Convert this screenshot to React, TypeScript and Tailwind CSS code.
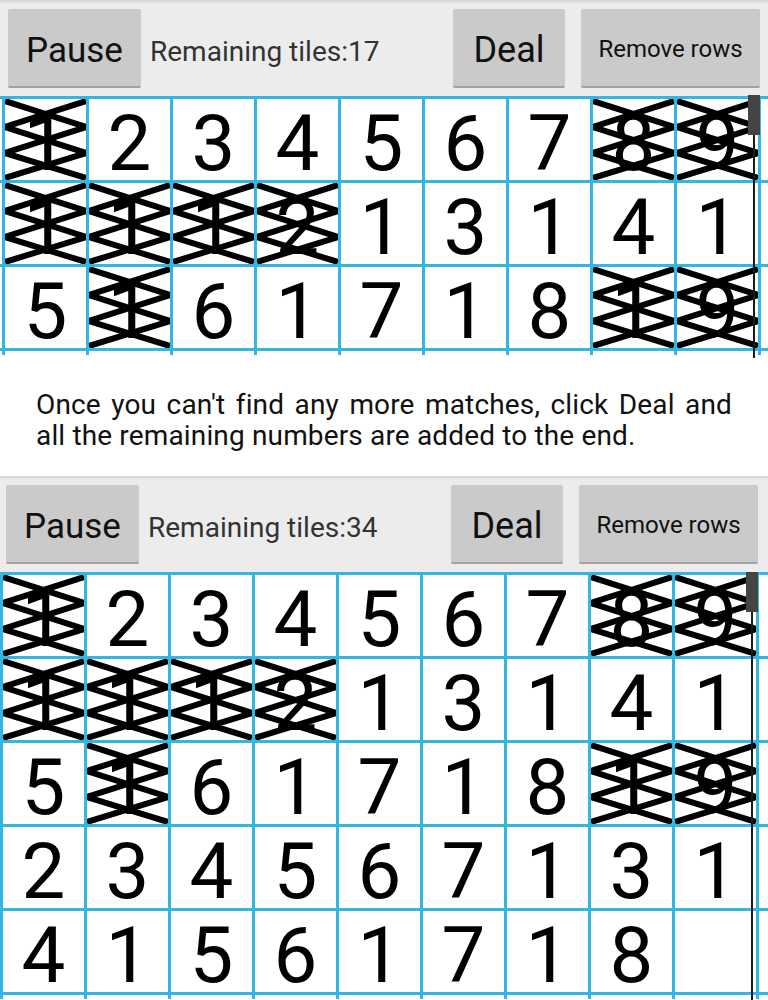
import React from "react";

// rows are written as "digit" or "digit x" (crossed out), "_" is an empty cell
const FIRST = [
    "1x 2 3 4 5 6 7 8x 9x",
    "1x 1x 1x 2x 1 3 1 4 1",
    "5 1x 6 1 7 1 8 1x 9x",
];

const SECOND = [
    ...FIRST,
    "2 3 4 5 6 7 1 3 1",
    "4 1 5 6 1 7 1 8 _",
];

function Cross() {
    return (
        <svg className="absolute inset-0 w-full h-full" viewBox="0 0 81 81" preserveAspectRatio="none">
            <polyline points="0,2 81,28 0,54 81,79" fill="none" stroke="#000" strokeWidth="6" strokeLinejoin="bevel" />
            <polyline points="81,2 0,28 81,54 0,79" fill="none" stroke="#000" strokeWidth="6" strokeLinejoin="bevel" />
        </svg>
    );
}

function Cell({ value, last }: { value: string; last: boolean }) {
    const crossed = value.endsWith("x");
    const digit = value === "_" ? "" : value.replace("x", "");
    return (
        <div
            className={
                last
                    ? "w-[87px] h-[81px] border-l-[3px] border-r-[3px] border-[#33b5e5]"
                    : "w-[84px] h-[81px] border-l-[3px] border-[#33b5e5]"
            }
        >
            <div className="relative w-full h-full flex items-center justify-center pt-[8px] text-[78px] leading-none text-black">
                {digit}
                {crossed && <Cross />}
            </div>
        </div>
    );
}

function Button({ label, className }: { label: string; className: string }) {
    return (
        <div
            className={
                "h-[79px] flex items-center justify-center bg-[#cacaca] border-b-2 border-[#a2a2a2] rounded-[2px] text-[#111] leading-none " +
                className
            }
        >
            {label}
        </div>
    );
}

function Panel({ rows, remaining, shifted }: { rows: string[]; remaining: number; shifted: boolean }) {
    return (
        <div>
            <div
                className={
                    shifted
                        ? "h-[96px] flex items-center pl-[6px] pr-[10px] bg-[linear-gradient(to_bottom,#d2d2d2,#ececec_4px)]"
                        : "h-[96px] flex items-center pl-[8px] pr-[8px] bg-[linear-gradient(to_bottom,#d2d2d2,#ececec_4px)]"
                }
            >
                <Button label="Pause" className="w-[133px] text-[35px] pt-[6px]" />
                <div className="ml-[9px] pt-[8px] text-[28px] leading-none text-[#333]">
                    Remaining tiles:{remaining}
                </div>
                <div className="flex-1" />
                <Button label="Deal" className="w-[112px] text-[36px] pt-[6px]" />
                <Button label="Remove rows" className="ml-[16px] w-[179px] text-[24px] pt-[3px]" />
            </div>

            <div className="relative bg-white">
                {rows.map((row, r) => (
                    <div
                        key={r}
                        className={
                            shifted
                                ? "flex border-t-[3px] border-[#33b5e5]"
                                : "flex pl-[2px] border-t-[3px] border-[#33b5e5]"
                        }
                    >
                        {row.split(" ").map((v, c) => (
                            <Cell key={c} value={v} last={c === 8} />
                        ))}
                    </div>
                ))}
                <div
                    className={
                        shifted
                            ? "flex h-[7px] border-t-[3px] border-[#33b5e5]"
                            : "flex h-[7px] pl-[2px] border-t-[3px] border-[#33b5e5]"
                    }
                >
                    {Array.from({ length: 9 }).map((_, c) => (
                        <div
                            key={c}
                            className={
                                c === 8
                                    ? "w-[87px] border-l-[3px] border-r-[3px] border-[#33b5e5]"
                                    : "w-[84px] border-l-[3px] border-[#33b5e5]"
                            }
                        />
                    ))}
                </div>

                {/* scroll track and thumb */}
                <div
                    className={
                        shifted
                            ? "absolute left-[751px] top-0 bottom-[-3px] w-[2px] bg-[#1a1a1a]"
                            : "absolute left-[753px] top-0 bottom-[-3px] w-[2px] bg-[#1a1a1a]"
                    }
                />
                <div
                    className={
                        shifted
                            ? "absolute left-[746px] top-0 w-[12px] h-[40px] bg-[#444]"
                            : "absolute left-[748px] top-[-1px] w-[12px] h-[40px] bg-[#444]"
                    }
                />
            </div>
        </div>
    );
}

export default function App() {
    return (
        <div className="w-[768px] h-[1000px] overflow-hidden bg-white font-['Roboto',sans-serif]">
            <Panel rows={FIRST} remaining={17} shifted={false} />
            <div className="h-[121px] pt-[34px] px-[36px] text-[28px] leading-[31px] tracking-[0.15px] text-[#111] text-justify">
                Once you can't find any more matches, click Deal and all the remaining numbers are added to the end.
            </div>
            <Panel rows={SECOND} remaining={34} shifted={true} />
        </div>
    );
}
